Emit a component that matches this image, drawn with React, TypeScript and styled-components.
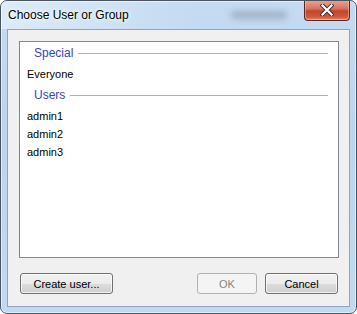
import React from 'react';
import styled, { createGlobalStyle } from 'styled-components';

const GlobalStyle = createGlobalStyle`
  html, body {
    margin: 0;
    padding: 0;
    background: #ffffff;
  }
  * {
    box-sizing: border-box;
  }
`;

const Window = styled.div`
  width: 357px;
  height: 314px;
  border: 1px solid #4a5360;
  border-radius: 7px;
  background: linear-gradient(to bottom, #c4dbf2 0%, #bcd5ef 40%, #c1daf2 100%);
  box-shadow: inset 0 0 0 1px rgba(255, 255, 255, 0.55);
  display: flex;
  flex-direction: column;
  overflow: hidden;
  font-family: 'Liberation Sans', Arial, sans-serif;
`;

const TitleBar = styled.div`
  height: 28px;
  flex: none;
  display: flex;
  align-items: flex-start;
  padding-left: 7px;
  background: linear-gradient(to right, rgba(255, 255, 255, 0.45), rgba(255, 255, 255, 0) 55%);
`;

const Title = styled.span`
  font-size: 12px;
  line-height: 14px;
  margin-top: 7px;
  color: #000;
  text-shadow: 0 0 6px #ffffff, 0 0 3px #ffffff;
`;

const GlassBlur = styled.div`
  margin-left: auto;
  margin-top: 10px;
  width: 56px;
  height: 8px;
  border-radius: 4px;
  background: rgba(120, 130, 145, 0.45);
  filter: blur(3px);
`;

const CloseButton = styled.div`
  width: 46px;
  height: 21px;
  margin-top: -1px;
  margin-left: 17px;
  margin-right: 6px;
  border: 1px solid #5b2620;
  border-top: none;
  border-radius: 0 0 4px 4px;
  background: linear-gradient(to bottom, #e9a898 0%, #d6705c 45%, #c4432d 55%, #cf5a3f 85%, #e58a66 100%);
  box-shadow: inset 0 0 0 1px rgba(255, 210, 190, 0.45);
  display: flex;
  align-items: center;
  justify-content: center;
`;

const Client = styled.div`
  flex: 1;
  margin: 0 6px 6px 6px;
  border: 1px solid #8fa5bb;
  background: #f0f0f0;
  padding: 11px 10px 12px 11px;
  display: flex;
  flex-direction: column;
`;

const ListBox = styled.div`
  flex: 1;
  border: 1px solid #828790;
  background: #ffffff;
  padding-top: 1px;
  display: flex;
  flex-direction: column;
`;

const GroupHeader = styled.div<{ $first?: boolean }>`
  height: 20px;
  margin-top: ${({ $first }) => ($first ? '0' : '2px')};
  margin-bottom: 2px;
  display: flex;
  align-items: center;
  gap: 5px;
  padding-left: 14px;
  padding-right: 10px;
  font-size: 12px;
  color: #3344bf;
`;

const HeaderRule = styled.div`
  flex: 1;
  height: 1px;
  background: #9db2e4;
`;

const Item = styled.div`
  height: 18px;
  display: flex;
  align-items: center;
  padding-left: 7px;
  font-size: 11px;
  color: #000;
`;

const Footer = styled.div`
  margin-top: 15px;
  display: flex;
  padding: 0 1px 0 1px;
  gap: 8px;
`;

const Button = styled.button<{ $width: number }>`
  width: ${({ $width }) => $width}px;
  height: 21px;
  padding: 0;
  border: 1px solid #707070;
  border-radius: 3px;
  font-family: 'Liberation Sans', Arial, sans-serif;
  font-size: 11px;
  color: #000;
  background: linear-gradient(to bottom, #f2f2f2 0%, #ebebeb 50%, #dddddd 50%, #cfcfcf 100%);
  box-shadow: inset 0 0 0 1px rgba(255, 255, 255, 0.7);

  &:disabled {
    border-color: #adb2b5;
    background: #f4f4f4;
    color: #838383;
    box-shadow: none;
  }
`;

const Spacer = styled.div`
  flex: 1;
`;

const CloseGlyph = () => (
  <svg width="14" height="12" viewBox="0 0 14 12">
    <path d="M2.5 1.5 L11.5 10.5 M11.5 1.5 L2.5 10.5" stroke="#3a2a2a" strokeWidth="4" strokeLinecap="square" />
    <path d="M2.5 1.5 L11.5 10.5 M11.5 1.5 L2.5 10.5" stroke="#ffffff" strokeWidth="2.2" strokeLinecap="square" />
  </svg>
);

const groups = [
  { name: 'Special', members: ['Everyone'] },
  { name: 'Users', members: ['admin1', 'admin2', 'admin3'] },
];

export default function App() {
  return (
    <>
      <GlobalStyle />
      <Window>
        <TitleBar>
          <Title>Choose User or Group</Title>
          <GlassBlur />
          <CloseButton>
            <CloseGlyph />
          </CloseButton>
        </TitleBar>
        <Client>
          <ListBox>
            {groups.map((group, i) => (
              <React.Fragment key={group.name}>
                <GroupHeader $first={i === 0}>
                  <span>{group.name}</span>
                  <HeaderRule />
                </GroupHeader>
                {group.members.map((member) => (
                  <Item key={member}>{member}</Item>
                ))}
              </React.Fragment>
            ))}
          </ListBox>
          <Footer>
            <Button $width={93}>Create user...</Button>
            <Spacer />
            <Button $width={60} disabled>
              OK
            </Button>
            <Button $width={73}>Cancel</Button>
          </Footer>
        </Client>
      </Window>
    </>
  );
}
